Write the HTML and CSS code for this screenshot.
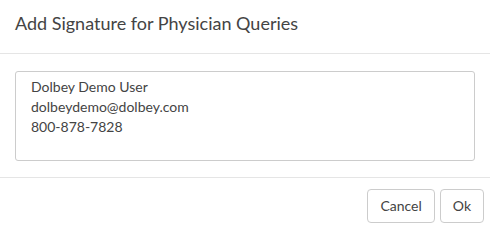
FILE: index.html
```html
<!DOCTYPE html>
<html>
<head>
<meta charset="utf-8">
<link rel="stylesheet" href="styles.css">
</head>
<body>
<div class="modal">
  <div class="modal-header">
    <h4 class="modal-title">Add Signature for Physician Queries</h4>
  </div>
  <div class="modal-body">
    <div class="signature">Dolbey Demo User<br>dolbeydemo@dolbey.com<br>800-878-7828</div>
  </div>
  <div class="modal-footer">
    <button class="btn">Cancel</button>
    <button class="btn">Ok</button>
  </div>
</div>
</body>
</html>
```

FILE: styles.css
```css
html, body {
  margin: 0;
  padding: 0;
  background: #fff;
}
body {
  font-family: Lato, "Open Sans", sans-serif;
  color: #333;
  width: 490px;
  height: 232px;
  overflow: hidden;
}
.modal {
  display: flex;
  flex-direction: column;
}
.modal-header {
  height: 54px;
  box-sizing: border-box;
  padding: 10px 15px 0 15px;
  border-bottom: 1px solid #e5e5e5;
}
.modal-title {
  margin: 0;
  font-size: 18px;
  font-weight: 400;
  line-height: 26px;
  color: #444;
}
.modal-body {
  padding: 17px 15px 16px 15px;
  border-bottom: 1px solid #e5e5e5;
}
.signature {
  box-sizing: border-box;
  height: 90px;
  border: 1px solid #ccc;
  border-radius: 3px;
  padding: 5px 15px;
  font-size: 14px;
  line-height: 20px;
  color: #444;
}
.modal-footer {
  display: flex;
  justify-content: flex-end;
  gap: 5px;
  padding: 11px 6px 0 0;
}
.btn {
  font-family: Lato, "Open Sans", sans-serif;
  font-size: 14px;
  line-height: 20px;
  height: 34px;
  padding: 6px 12px;
  background: #fff;
  color: #444;
  border: 1px solid #ccc;
  border-radius: 4px;
  box-sizing: border-box;
}
```
